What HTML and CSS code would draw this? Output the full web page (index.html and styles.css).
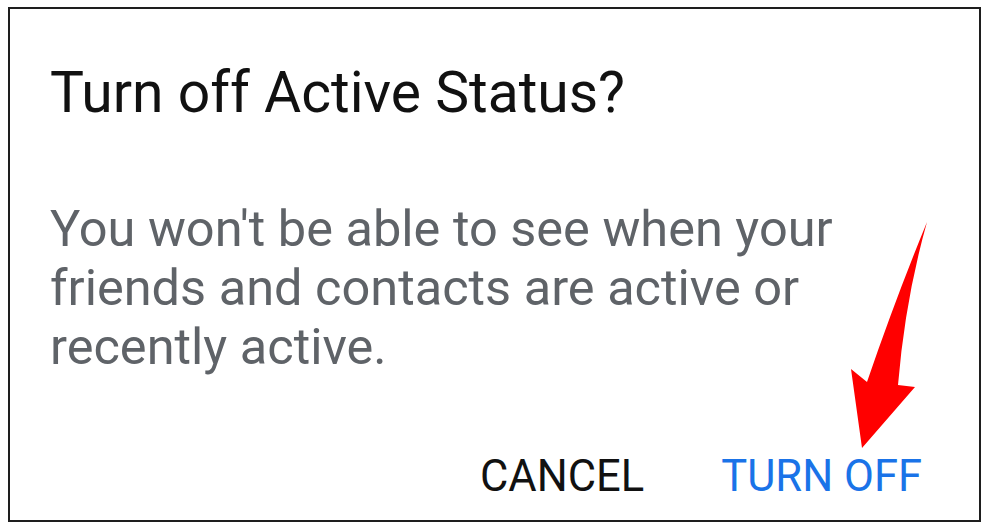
FILE: index.html
```html
<!DOCTYPE html>
<html lang="en">
<head>
    <meta charset="UTF-8">
    <meta name="viewport" content="width=device-width, initial-scale=1.0">
    <title>Turn off Active Status?</title>
    <link rel="stylesheet" href="styles.css">
</head>
<body>
    <div class="frame">
        <div class="dialog">
            <h1 class="title">Turn off Active Status?</h1>
            <p class="message">You won't be able to see when your friends and contacts are active or recently active.</p>
            <div class="actions">
                <button class="btn btn-cancel">CANCEL</button>
                <button class="btn btn-confirm">TURN OFF</button>
            </div>
        </div>

        <svg class="arrow" width="989" height="529" viewBox="0 0 989 529">
            <path d="M927 222 Q905 300 898 385 L915 387 L862 448 L851 369 L867 382 Q895 300 927 222 Z" fill="#ff0000"/>
        </svg>
    </div>
</body>
</html>
```

FILE: styles.css
```css
body {
    margin: 0;
    padding: 7px 8px;
    background: #ffffff;
    font-family: 'Roboto', 'Liberation Sans', sans-serif;
}

.frame {
    position: relative;
    box-sizing: border-box;
    width: 973px;
    height: 515px;
    border: 2px solid #1e1e1e;
    background: #ffffff;
}

.dialog {
    display: flex;
    flex-direction: column;
    height: 100%;
    padding: 0 0 0 40px;
    box-sizing: border-box;
}

.title {
    margin: 50px 0 0 0;
    font-size: 57px;
    font-weight: 400;
    line-height: 68px;
    color: #111111;
}

.message {
    margin: 72px 0 0 0;
    width: 870px;
    font-size: 50.5px;
    line-height: 59px;
    color: #5f6368;
}

.actions {
    display: flex;
    justify-content: flex-end;
    gap: 77px;
    margin-top: auto;
    padding: 0 57px 15px 0;
}

.btn {
    border: none;
    background: none;
    padding: 0;
    font-family: inherit;
    font-size: 43.5px;
    line-height: 56px;
    cursor: pointer;
}

.btn-cancel {
    color: #111111;
}

.btn-confirm {
    color: #1a73e8;
}

.arrow {
    position: absolute;
    left: -10px;
    top: -9px;
    pointer-events: none;
}
```
